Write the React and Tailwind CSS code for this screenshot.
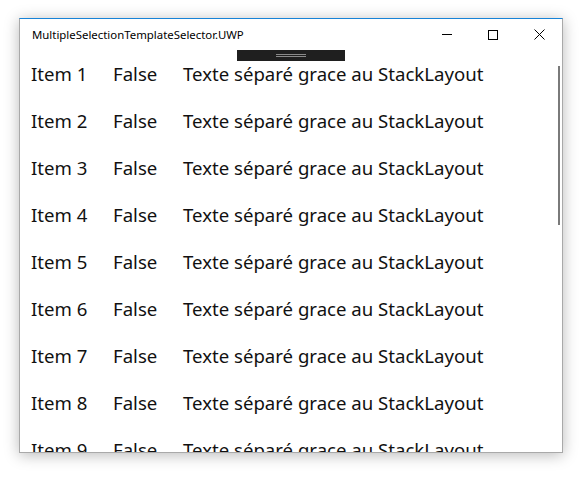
const rows = [1, 2, 3, 4, 5, 6, 7, 8, 9];

const App = () => {
  return (
    <div className="w-[588px] h-[480px] bg-white pt-[18px] pl-[19px] font-['Noto_Sans',sans-serif]">
      <div className="w-[544px] h-[435px] bg-white border border-[#a9a9a9] border-t-[#1883d7] shadow-[0_2px_14px_rgba(0,0,0,0.28)] flex flex-col overflow-hidden">
        <div className="h-[31px] flex items-center shrink-0">
          <div className="flex-1 pl-[12px] text-[11.4px] text-black leading-none">
            MultipleSelectionTemplateSelector.UWP
          </div>
          <div className="w-[46px] h-full flex items-center justify-center">
            <div className="w-[10px] h-px bg-black" />
          </div>
          <div className="w-[46px] h-full flex items-center justify-center">
            <div className="w-[10px] h-[10px] border border-black" />
          </div>
          <div className="w-[46px] h-full flex items-center justify-center">
            <svg width="11" height="11" viewBox="0 0 11 11">
              <path d="M0.5 0.5L10.5 10.5M10.5 0.5L0.5 10.5" stroke="#000" strokeWidth="1" />
            </svg>
          </div>
        </div>
        <div className="relative flex-1 overflow-hidden">
          <div className="absolute top-0 left-[217px] w-[108px] h-[11px] bg-[#1f1f1f] flex flex-col items-center justify-center gap-[1px]">
            <div className="w-[30px] h-px bg-[#8a8a8a]" />
            <div className="w-[30px] h-px bg-[#8a8a8a]" />
          </div>
          <div className="absolute top-[16px] left-[538px] w-[2px] h-[159px] bg-[#7a7a7a]" />
          <div className="pl-[11px]">
            {rows.map((n) => (
              <div key={n} className="h-[47px] flex items-center text-[18.6px] text-[#111]">
                <span className="w-[82px]">Item {n}</span>
                <span className="w-[70px]">False</span>
                <span>Texte séparé grace au StackLayout</span>
              </div>
            ))}
          </div>
        </div>
      </div>
    </div>
  );
};

export default App;
